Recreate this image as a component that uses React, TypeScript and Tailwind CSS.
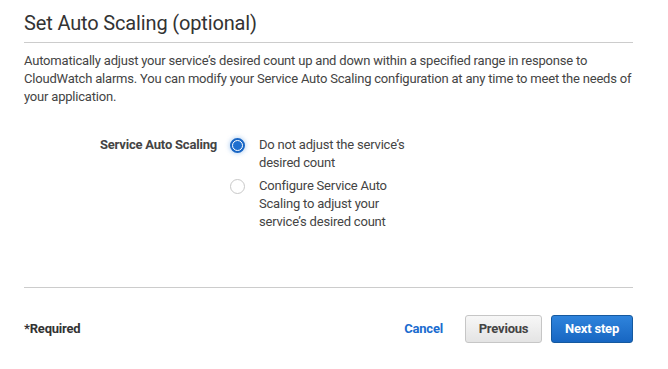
import { useState } from "react";

const AutoScalingStep = () => {
  const [choice, setChoice] = useState("none");

  const options = [
    { id: "none", label: "Do not adjust the service\u2019s desired count" },
    {
      id: "configure",
      label: "Configure Service Auto Scaling to adjust your service\u2019s desired count",
    },
  ];

  return (
    <div className="min-h-screen bg-white font-['Roboto',sans-serif] text-[#444]">
      <div className="w-[609px] ml-6 pt-[11px]">
        <h2 className="text-[20px] leading-6 tracking-[-0.15px] text-[#333] pb-[7px] border-b border-[#ccc]">
          Set Auto Scaling (optional)
        </h2>

        <p className="mt-[9px] text-[13px] leading-[18px] tracking-[-0.2px]">
          Automatically adjust your service&rsquo;s desired count up and down within a specified range in response to
          CloudWatch alarms. You can modify your Service Auto Scaling configuration at any time to meet the needs of
          your application.
        </p>

        {/* Service Auto Scaling row */}
        <div className="mt-[30px] flex items-start">
          <div className="w-[193px] text-right text-[13px] leading-[18px] tracking-[-0.2px] font-bold text-[#444]">
            Service Auto Scaling
          </div>
          <div className="ml-[13px] flex flex-col gap-[5px]">
            {options.map((opt) => (
              <label key={opt.id} className="flex items-start cursor-pointer">
                <span className="mt-[2px] w-[15px] h-[15px] flex items-center justify-center shrink-0">
                  {choice === opt.id ? (
                    <span className="w-[15px] h-[15px] rounded-full bg-[#1f6fcf] border-2 border-[#1a66c4] shadow-[0_0_4px_1px_rgba(70,140,220,0.35)] flex items-center justify-center">
                      <span className="w-[11px] h-[11px] rounded-full border-[1.5px] border-white bg-[#1f6fcf]" />
                    </span>
                  ) : (
                    <span className="w-[15px] h-[15px] rounded-full border border-[#c8c8c8] bg-white" />
                  )}
                </span>
                <input
                  type="radio"
                  name="scaling"
                  className="hidden"
                  checked={choice === opt.id}
                  onChange={() => setChoice(opt.id)}
                />
                <span className="ml-[14px] w-[152px] text-[13px] leading-[18px] tracking-[-0.2px] text-[#444]">
                  {opt.label}
                </span>
              </label>
            ))}
          </div>
        </div>

        <div className="mt-[56px] border-t border-[#ccc]" />

        {/* Footer */}
        <div className="mt-[27px] flex items-center">
          <span className="text-[13px] tracking-[-0.2px] font-bold text-[#333]">*Required</span>
          <div className="ml-auto flex items-center">
            <button className="text-[13px] tracking-[-0.2px] font-bold text-[#1a6ccf]">Cancel</button>
            <button className="ml-[22px] w-[77px] h-[28px] rounded-[3px] border border-[#c6c6c6] bg-linear-to-b from-[#f7f7f7] to-[#e4e4e4] text-[13px] tracking-[-0.2px] font-bold text-[#444]">
              Previous
            </button>
            <button className="ml-[9px] w-[82px] h-[28px] rounded-[3px] border border-[#15599f] bg-linear-to-b from-[#2f84dc] to-[#1766c2] text-[13px] tracking-[-0.2px] font-bold text-white">
              Next step
            </button>
          </div>
        </div>
      </div>
    </div>
  );
};

export default function App() {
  return <AutoScalingStep />;
}
